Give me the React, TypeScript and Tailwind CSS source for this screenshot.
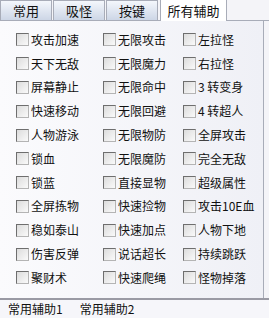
import React from "react";

const rows: [string, string, string][] = [
  ["攻击加速", "无限攻击", "左拉怪"],
  ["天下无敌", "无限魔力", "右拉怪"],
  ["屏幕静止", "无限命中", "3 转变身"],
  ["快速移动", "无限回避", "4 转超人"],
  ["人物游泳", "无限物防", "全屏攻击"],
  ["锁血", "无限魔防", "完全无敌"],
  ["锁蓝", "直接显物", "超级属性"],
  ["全屏拣物", "快速捡物", "攻击10E血"],
  ["稳如泰山", "快速加点", "人物下地"],
  ["伤害反弹", "说话超长", "持续跳跃"],
  ["聚财术", "快速爬绳", "怪物掉落"],
];

const tabs = ["常用", "吸怪", "按键", "所有辅助"];

function Check({ label }: { label: string }) {
  return (
    <label className="flex items-center gap-[2px] h-[23.8px]">
      <span className="w-[13px] h-[13px] border border-t-[#6e6e6e] border-l-[#6e6e6e] border-r-[#b4b4b4] border-b-[#b4b4b4] bg-gradient-to-br from-[#dcdcdc] to-[#fafafa] shrink-0" />
      <span className="text-[12px] leading-none text-[#111] whitespace-pre">{label}</span>
    </label>
  );
}

export default function App() {
  return (
    <div
      className="w-[269px] h-[318px] bg-[#f4f4f8] flex flex-col overflow-hidden"
      style={{ fontFamily: '"Noto Sans CJK SC", "Liberation Sans", sans-serif' }}
    >
      <div className="h-[21px] flex items-end pr-[5px] border-b border-[#a8acb8]">
        {tabs.map((t, i) =>
          i === tabs.length - 1 ? (
            <div
              key={t}
              className="ml-[1px] w-[67px] h-[22px] -mb-[1px] bg-white border border-b-0 border-[#a8acb8] flex items-center justify-center text-[13px] text-[#111]"
            >
              {t}
            </div>
          ) : (
            <div
              key={t}
              className="w-[52px] h-[20px] mr-[1px] bg-gradient-to-b from-[#f4f7fc] to-[#cdd6e6] border border-b-0 border-[#a8acb8] flex items-center justify-center text-[13px] text-[#111]"
            >
              {t}
            </div>
          )
        )}
        <div className="flex-1" />
      </div>
      <div className="flex-1 mr-[5px] border-r border-[#a8acb8] bg-gradient-to-r from-[#fbfbfd] to-[#eff0f6] pt-[7px] pl-[16px]">
        <div className="grid grid-cols-[87px_80px_1fr]">
          {rows.map((r) =>
            r.map((c) => <Check key={c} label={c} />)
          )}
        </div>
      </div>
      <div className="h-[20px] border-t-2 border-[#9a9aa4] bg-[#f6f6fa] flex items-center gap-[17px] pl-[8px] text-[12px] text-[#111]">
        <span>常用辅助1</span>
        <span>常用辅助2</span>
      </div>
    </div>
  );
}
